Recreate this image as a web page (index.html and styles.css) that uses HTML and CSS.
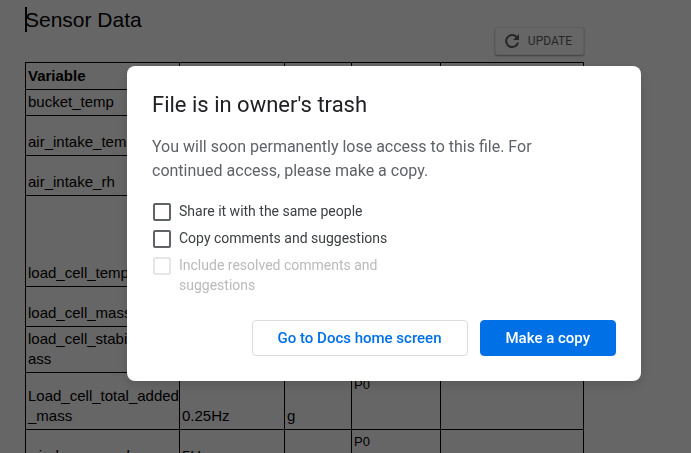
FILE: index.html
```html
<!DOCTYPE html>
<html lang="en">
<head>
<meta charset="utf-8">
<title>Sensor Data</title>
<link rel="stylesheet" href="styles.css">
</head>
<body>
<main class="document">
  <h1 class="doc-title">Sensor Data</h1>
  <div class="toolbar">
    <button class="update" type="button">
      <svg class="update-icon" viewBox="0 0 16 16" aria-hidden="true"><path d="M12.6 4A6 6 0 1 0 14 9.500" fill="none" stroke="currentColor" stroke-width="2"/><path d="M15 1v6H9z" fill="currentColor"/></svg>
      UPDATE
    </button>
  </div>
  <table class="sensors">
    <colgroup><col class="col-name"><col class="col-rate"><col class="col-unit"><col class="col-priority"><col></colgroup>
    <tr class="row-head"><th>Variable</th><th></th><th></th><th></th><th></th></tr>
    <tr class="row-line"><td>bucket_temp</td><td></td><td></td><td></td><td></td></tr>
    <tr class="row-mid"><td>air_intake_temp</td><td></td><td></td><td></td><td></td></tr>
    <tr class="row-mid"><td>air_intake_rh</td><td></td><td></td><td></td><td></td></tr>
    <tr class="row-tall"><td>load_cell_temp</td><td></td><td></td><td></td><td></td></tr>
    <tr class="row-mid"><td>load_cell_mass</td><td></td><td></td><td></td><td></td></tr>
    <tr class="row-double"><td>load_cell_stabil_m<br>ass</td><td></td><td></td><td></td><td></td></tr>
    <tr class="row-total"><td>Load_cell_total_added<br>_mass</td><td>0.25Hz</td><td>g</td><td class="priority">P0</td><td></td></tr>
    <tr class="row-mid"><td>wind_averaged</td><td>5Hz</td><td></td><td class="priority">P0</td><td></td></tr>
  </table>
</main>
<div class="overlay">
  <section class="dialog" role="dialog" aria-modal="true" aria-labelledby="dialog-title">
    <h2 class="dialog-title" id="dialog-title">File is in owner's trash</h2>
    <p class="dialog-text">You will soon permanently lose access to this file. For continued access, please make a copy.</p>
    <div class="options">
      <label class="option"><input class="box" type="checkbox"><span>Share it with the same people</span></label>
      <label class="option"><input class="box" type="checkbox"><span>Copy comments and suggestions</span></label>
      <label class="option option-off"><input class="box" type="checkbox" disabled><span>Include resolved comments and suggestions</span></label>
    </div>
    <div class="actions">
      <button class="btn" type="button">Go to Docs home screen</button>
      <button class="btn btn-primary" type="button">Make a copy</button>
    </div>
  </section>
</div>
</body>
</html>
```
FILE: styles.css
```css
* { box-sizing: border-box; }

body {
  margin: 0;
  height: 100vh;
  overflow: hidden;
  background: #fff;
  color: #000;
  font-family: "Liberation Sans", Arial, sans-serif;
}

.document { padding: 7px 107px 0 25px; }

.doc-title {
  margin: 0;
  border-left: 2px solid #000;
  font-size: 21px;
  line-height: 25px;
  font-weight: 400;
  text-indent: -2px;
}

.toolbar {
  display: flex;
  justify-content: flex-end;
  margin: -5px 0 7px;
}

.update {
  display: flex;
  align-items: center;
  gap: 8px;
  height: 28px;
  padding: 0 11px 0 8px;
  border: 1px solid #eee;
  border-radius: 2px;
  background: #fff;
  color: #5f5f5f;
  font: 400 12px/16px Roboto, sans-serif;
  box-shadow: 0 1px 2px rgba(0, 0, 0, 0.4);
}

.update-icon { width: 16px; height: 16px; }

.sensors {
  width: 100%;
  table-layout: fixed;
  border-collapse: collapse;
  font-size: 15px;
  line-height: 20px;
}

.col-name { width: 154px; }
.col-rate { width: 105px; }
.col-unit { width: 67px; }
.col-priority { width: 89px; }

.sensors th,
.sensors td {
  padding: 2px 0 3px 2px;
  border: 1px solid #000;
  text-align: left;
  vertical-align: bottom;
  white-space: nowrap;
}

.sensors .priority {
  font-size: 13px;
  vertical-align: top;
}

.row-head { height: 27px; }
.row-line { height: 26px; }
.row-mid { height: 40px; }
.row-tall { height: 91px; }
.row-double { height: 46px; }
.row-total { height: 57px; }

.overlay {
  position: fixed;
  inset: 0;
  display: flex;
  align-items: center;
  justify-content: center;
  padding: 0 0 6px 77px;
  background: rgba(0, 0, 0, 0.6);
}

.dialog {
  width: 100%;
  max-width: 514px;
  padding: 25px;
  border-radius: 8px;
  background: #fff;
  box-shadow: 0 4px 12px rgba(0, 0, 0, 0.15);
  font-family: Roboto, sans-serif;
}

.dialog-title {
  margin: 0 0 16px;
  color: #202124;
  font-size: 22px;
  line-height: 28px;
  font-weight: 400;
}

.dialog-text {
  max-width: 400px;
  margin: 0 0 18px;
  color: #5f6368;
  font-size: 16px;
  line-height: 24px;
}

.options {
  display: grid;
  gap: 7px;
  margin-bottom: 25px;
}

.option {
  display: flex;
  gap: 8px;
  max-width: 260px;
  color: #3c4043;
  font-size: 14px;
  line-height: 20px;
}

.box {
  appearance: none;
  flex: none;
  width: 18px;
  height: 18px;
  margin: 2px 0 0 1px;
  border: 2px solid #5f6368;
  border-radius: 2px;
}

.option-off { color: #b8babb; }
.option-off .box { border-color: #e6e6e6; }

.actions {
  display: flex;
  justify-content: flex-end;
  gap: 12px;
}

.btn {
  height: 36px;
  padding: 0 25px;
  border: 1px solid #dadce0;
  border-radius: 4px;
  background: #fff;
  color: #0070e6;
  font: 500 15px/20px Roboto, sans-serif;
}

.btn-primary {
  border-color: #0070e6;
  background: #0070e6;
  color: #fff;
}
```
